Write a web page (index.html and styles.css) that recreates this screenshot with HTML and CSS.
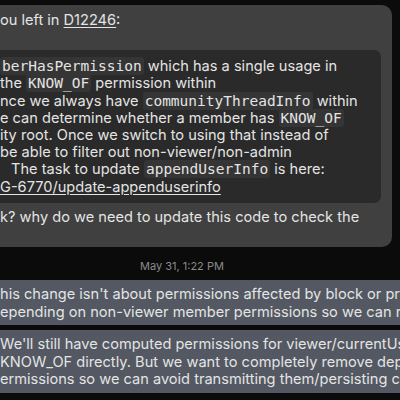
FILE: index.html
```html
<!DOCTYPE html>
<html>
<head>
<meta charset="utf-8">
<link rel="stylesheet" href="styles.css">
</head>
<body>
<div class="thread">
  <div class="bubble theirs">
    <div class="line">ou left in <span class="link">D12246</span>:</div>
    <div class="quote">
      <div class="line"><code>berHasPermission</code> which has a single usage in</div>
      <div class="line">the <code>KNOW_OF</code> permission within</div>
      <div class="line">nce we always have <code>communityThreadInfo</code> within</div>
      <div class="line">e can determine whether a member has <code>KNOW_OF</code></div>
      <div class="line">ity root. Once we switch to using that instead of</div>
      <div class="line">be able to filter out non-viewer/non-admin</div>
      <div class="line indent">The task to update <code>appendUserInfo</code> is here:</div>
      <div class="line"><span class="link">G-6770/update-appenduserinfo</span></div>
    </div>
    <div class="line">k? why do we need to update this code to check the</div>
  </div>
  <div class="time">May 31, 1:22 PM</div>
  <div class="bubble mine">
    <div class="line">his change isn't about permissions affected by block or pr</div>
    <div class="line">epending on non-viewer member permissions so we can n</div>
  </div>
  <div class="bubble mine">
    <div class="line">We'll still have computed permissions for viewer/currentUse</div>
    <div class="line">KNOW_OF directly. But we want to completely remove depe</div>
    <div class="line">ermissions so we can avoid transmitting them/persisting c</div>
  </div>
</div>
</body>
</html>
```

FILE: styles.css
```css
html, body {
  margin: 0;
  padding: 0;
  background: #0b0b0b;
  overflow: hidden;
}
body {
  width: 400px;
  height: 400px;
  font-family: Inter, "Noto Sans", sans-serif;
  font-size: 14.6px;
  color: #e4e4e4;
}
.thread {
  display: flex;
  flex-direction: column;
  padding-top: 5px;
}
.line {
  white-space: pre;
  line-height: 17.2px;
}
.bubble {
  border-radius: 10px;
}
.theirs {
  background: #404040;
  margin-left: -20px;
  margin-right: 8px;
  padding: 7px 11px 21px 20px;
}
.quote {
  background: #2a2a2a;
  border-radius: 7px;
  margin-top: 21px;
  margin-bottom: 6px;
  margin-left: -20px;
  padding: 8px 0 7px 20px;
}
.indent {
  padding-left: 11px;
}
code {
  font-family: "DejaVu Sans Mono", monospace;
  font-size: 14.5px;
  background: #353535;
  border-radius: 3px;
  padding: 1px 2px;
}
.link {
  text-decoration: underline;
  text-underline-offset: 2px;
}
.time {
  color: #8a8a8a;
  font-size: 11px;
  line-height: 14px;
  padding-left: 140px;
  margin-top: 12px;
  margin-bottom: 7px;
}
.mine {
  background: #535862;
  margin-left: -20px;
  margin-right: -20px;
  padding: 6px 20px 4px 20px;
  margin-bottom: 5px;
}
.mine .line {
  line-height: 17.5px;
}
```
